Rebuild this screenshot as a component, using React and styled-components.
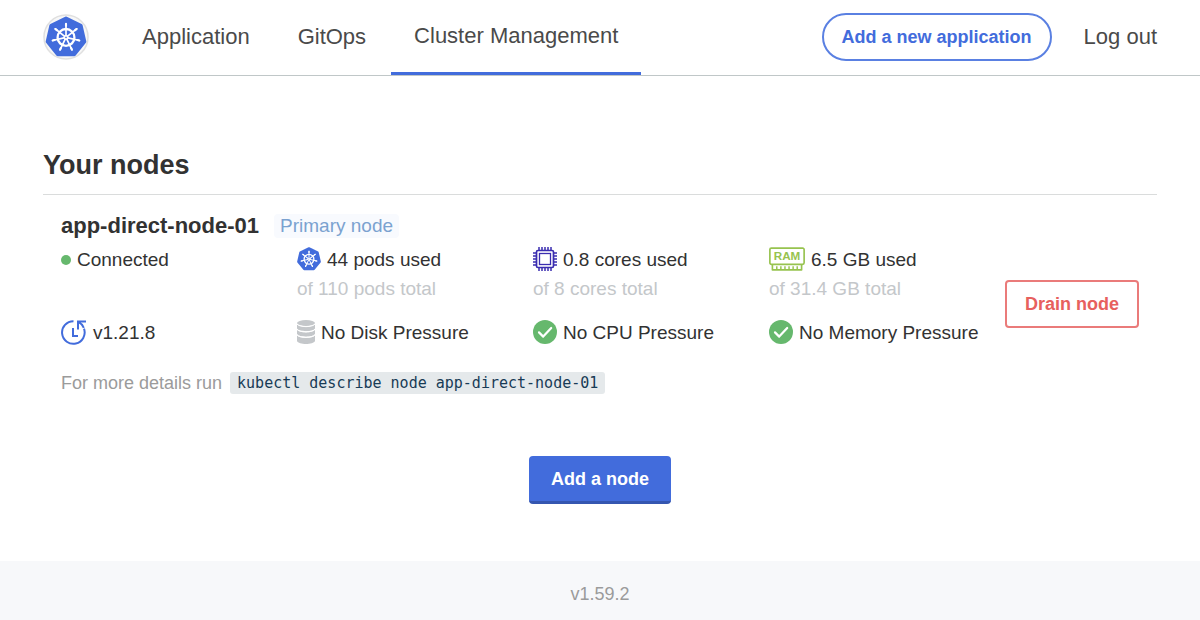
import React from "react";
import styled, { createGlobalStyle } from "styled-components";

const GlobalStyle = createGlobalStyle`
  *, *::before, *::after { box-sizing: border-box; }
  body {
    margin: 0;
    background: #fff;
    color: #323232;
    font-family: "Helvetica Neue", "Liberation Sans", Arial, sans-serif;
    font-size: 19px;
    line-height: 24px;
    -webkit-font-smoothing: antialiased;
  }
`;

const Page = styled.div`
  display: flex;
  flex-direction: column;
  min-height: 100vh;
`;

const Header = styled.header`
  display: flex;
  align-items: stretch;
  min-height: 76px;
  padding: 0 43px;
  border-bottom: 1px solid #c0c7c8;
`;

const LogoLink = styled.a`
  display: flex;
  align-items: center;
  margin-right: 30px;
  padding-bottom: 2px;
`;

const Nav = styled.nav`
  display: flex;
  gap: 2px;
`;

const Tab = styled.a`
  display: flex;
  align-items: center;
  padding: 0 23px ${({ $active }) => ($active ? 0 : 2)}px;
  border-bottom: ${({ $active }) => ($active ? "3px solid #426cdc" : "0")};
  color: #4a4a4a;
  font-size: 22px;
  text-decoration: none;
  white-space: nowrap;
`;

const Actions = styled.div`
  display: flex;
  align-items: center;
  gap: 32px;
  margin-left: auto;
  padding-bottom: 2px;
`;

const LogoutLink = styled.a`
  color: #4a4a4a;
  font-size: 22px;
  text-decoration: none;
`;

const Button = styled.button`
  height: 48px;
  padding: 0 18px;
  border: 2px solid currentColor;
  border-radius: 4px;
  background: #fff;
  color: #426cdc;
  font: bold 18px/24px "Helvetica Neue", "Liberation Sans", Arial, sans-serif;
  white-space: nowrap;
  cursor: pointer;
`;

const PillButton = styled(Button)`
  border-color: #5a80e2;
  border-radius: 24px;
`;

const DangerButton = styled(Button)`
  border-color: #ea7b7a;
  color: #e7605e;
`;

const PrimaryButton = styled(Button)`
  padding: 0 22px;
  border: 0;
  border-bottom: 3px solid #3556b0;
  background: #426cdc;
  color: #fff;
`;

const Main = styled.main`
  flex: 1;
  padding: 70px 43px 57px;
`;

const Title = styled.h1`
  margin: 0;
  padding: 2px 0 12px;
  border-bottom: 1px solid #dadcdc;
  font-size: 27px;
  line-height: 34px;
`;

const NodeCard = styled.section`
  display: flex;
  align-items: center;
  padding: 18px 18px 6px;
`;

const NodeInfo = styled.div`
  flex: 1;
`;

const NodeHeading = styled.div`
  display: flex;
  align-items: center;
  gap: 15px;
`;

const NodeName = styled.h2`
  margin: 0;
  font-size: 22px;
  line-height: 26px;
`;

const Tag = styled.span`
  padding: 0 6px;
  border-radius: 4px;
  background: #f8fafe;
  color: #7ba2d0;
`;

const Stats = styled.div`
  display: grid;
  grid-template-columns: repeat(4, 1fr);
  row-gap: 18px;
  padding-top: 8px;
`;

const Stat = styled.div`
  min-height: 26px;
`;

const StatLine = styled.div`
  display: flex;
  align-items: center;
  gap: 6px;
  min-height: 26px;
  white-space: nowrap;
  svg { flex: none; }
`;

const StatTotal = styled.div`
  padding-top: 3px;
  color: #c4c7ca;
  line-height: 26px;
`;

const Dot = styled.span`
  width: 10px;
  height: 10px;
  border-radius: 50%;
  background: #66b86d;
`;

const Details = styled.p`
  display: flex;
  align-items: center;
  gap: 8px;
  margin: 25px 0 0;
  color: #9b9b9b;
  font-size: 18px;
`;

const Code = styled.code`
  padding: 0 7px;
  border-radius: 3px;
  background: #e5e9eb;
  color: #183b56;
  font: 15px/22px "DejaVu Sans Mono", monospace;
`;

const AddRow = styled.div`
  display: flex;
  justify-content: center;
  padding-top: 55px;
`;

const Footer = styled.footer`
  padding: 21px 0 14px;
  background: #f7f8fa;
  color: #9b9b9b;
  font-size: 18px;
  text-align: center;
`;

const spokes = [0, 1, 2, 3, 4, 5, 6].map((n) => (n * 360) / 7);
const heptagon = spokes
  .map((a) => {
    const r = (a * Math.PI) / 180;
    return `${(50 + 45 * Math.sin(r)).toFixed(1)},${(51 - 45 * Math.cos(r)).toFixed(1)}`;
  })
  .join(" ");

function Helm() {
  return (
    <g>
      <polygon points={heptagon} fill="#426cdc" stroke="#426cdc" strokeWidth="9" strokeLinejoin="round" />
      <g stroke="#fff" fill="none" strokeLinecap="round">
        <circle cx="50" cy="51" r="20" strokeWidth="5.5" />
        {spokes.map((a) => (
          <g key={a} transform={`rotate(${a} 50 51)`}>
            <path d="M50 46V18" strokeWidth="4" />
            <path d="M50 23v-4" strokeWidth="5" />
          </g>
        ))}
        <circle cx="50" cy="51" r="4" strokeWidth="4" />
      </g>
    </g>
  );
}

function Logo() {
  return (
    <svg width="46" height="46" viewBox="0 0 46 46" aria-hidden="true">
      <circle cx="23" cy="23" r="22" fill="#f7f7f7" stroke="#e0e0e0" strokeWidth="1.5" />
      <svg x="2" y="2" width="42" height="42" viewBox="0 0 100 100">
        <Helm />
      </svg>
    </svg>
  );
}

function PodIcon() {
  return (
    <svg width="24" height="26" viewBox="1 1 98 106" aria-hidden="true">
      <Helm />
    </svg>
  );
}

function CpuIcon() {
  return (
    <svg width="24" height="26" viewBox="0 1 24 26" fill="none" stroke="#3a2db0" aria-hidden="true">
      <rect x="3.5" y="4.5" width="17" height="17" rx="1.5" strokeWidth="1.7" />
      <rect x="6.5" y="7.5" width="11" height="11" strokeWidth="1.3" />
      <path
        strokeWidth="1.5"
        d="M6 1v3M9 1v3M12 1v3M15 1v3M18 1v3M6 22v3M9 22v3M12 22v3M15 22v3M18 22v3M0 7h3M0 10h3M0 13h3M0 16h3M0 19h3M21 7h3M21 10h3M21 13h3M21 16h3M21 19h3"
      />
    </svg>
  );
}

function RamIcon() {
  return (
    <svg width="36" height="26" viewBox="0 1 37 26" fill="none" stroke="#97c34f" aria-hidden="true">
      <path
        strokeWidth="1.7"
        strokeLinejoin="round"
        d="M3.5 18.500H2.500A1.600 1.600 0 0 1 .9 16.900V3.300a1.500 1.500 0 0 1 1.500-1.500h32.200a1.500 1.500 0 0 1 1.500 1.500v13.600a1.600 1.600 0 0 1-1.600 1.600h-1M3.500 18.500h30v5.700h-30z"
      />
      <path strokeWidth="1.5" d="M8 20.500v3.500M12.200 20.500v3.500M16.400 20.500v3.500M20.600 20.500v3.500M24.800 20.500v3.500M29 20.500v3.500" />
      <text x="18.5" y="14" textAnchor="middle" fill="#97c34f" stroke="none" fontFamily="Liberation Sans, Arial, sans-serif" fontWeight="bold" fontSize="12">
        RAM
      </text>
    </svg>
  );
}

function VersionIcon() {
  return (
    <svg width="26" height="26" viewBox="0 1 26 26" fill="none" stroke="#426cdc" strokeWidth="2" aria-hidden="true">
      <path d="M12.500 2.200A11.300 11.300 0 1 0 23 9.700" />
      <path d="M17 10.500V2.500H25M17.300 2.800c2.500 1.200 4.300 3.200 5.500 6" />
      <path d="M12 9v8h5" />
    </svg>
  );
}

function DiskIcon() {
  return (
    <svg width="18" height="26" viewBox="0 1 18 26" fill="#c4c7ca" aria-hidden="true">
      <ellipse cx="9" cy="4" rx="9" ry="3" />
      <path d="M0 5c2 3.500 16 3.500 18 0v4.500c-1.500 3.500-16.500 3.500-18 0z" />
      <path d="M0 10.800c2 3.500 16 3.500 18 0v4.200c-1.500 3.500-16.500 3.500-18 0z" />
      <path d="M0 16.300c2 3.500 16 3.500 18 0v5.700c-1.500 4-16.500 4-18 0z" />
      <path
        d="M0 5c2 3.500 16 3.500 18 0M0 10.200c2 3.500 16 3.500 18 0M0 15.700c2 3.500 16 3.500 18 0"
        fill="none"
        stroke="#fff"
        strokeWidth="1"
      />
    </svg>
  );
}

function CheckIcon() {
  return (
    <svg width="24" height="26" viewBox="0 0 24 26" aria-hidden="true">
      <circle cx="12" cy="12" r="12" fill="#66b86d" />
      <path d="M6 12.400l4.200 4.200 8-8.600" fill="none" stroke="#fff" strokeWidth="2.2" strokeLinecap="round" strokeLinejoin="round" />
    </svg>
  );
}

export default function App() {
  return (
    <Page>
      <GlobalStyle />
      <Header>
        <LogoLink href="#" aria-label="Home">
          <Logo />
        </LogoLink>
        <Nav>
          <Tab href="#application">Application</Tab>
          <Tab href="#gitops">GitOps</Tab>
          <Tab href="#cluster" $active aria-current="page">Cluster Management</Tab>
        </Nav>
        <Actions>
          <PillButton type="button">Add a new application</PillButton>
          <LogoutLink href="#logout">Log out</LogoutLink>
        </Actions>
      </Header>
      <Main>
        <Title>Your nodes</Title>
        <NodeCard>
          <NodeInfo>
            <NodeHeading>
              <NodeName>app-direct-node-01</NodeName>
              <Tag>Primary node</Tag>
            </NodeHeading>
            <Stats>
              <Stat>
                <StatLine><Dot />Connected</StatLine>
              </Stat>
              <Stat>
                <StatLine><PodIcon />44 pods used</StatLine>
                <StatTotal>of 110 pods total</StatTotal>
              </Stat>
              <Stat>
                <StatLine><CpuIcon />0.8 cores used</StatLine>
                <StatTotal>of 8 cores total</StatTotal>
              </Stat>
              <Stat>
                <StatLine><RamIcon />6.5 GB used</StatLine>
                <StatTotal>of 31.4 GB total</StatTotal>
              </Stat>
              <StatLine><VersionIcon />v1.21.8</StatLine>
              <StatLine><DiskIcon />No Disk Pressure</StatLine>
              <StatLine><CheckIcon />No CPU Pressure</StatLine>
              <StatLine><CheckIcon />No Memory Pressure</StatLine>
            </Stats>
            <Details>
              For more details run
              <Code>kubectl describe node app-direct-node-01</Code>
            </Details>
          </NodeInfo>
          <DangerButton type="button">Drain node</DangerButton>
        </NodeCard>
        <AddRow>
          <PrimaryButton type="button">Add a node</PrimaryButton>
        </AddRow>
      </Main>
      <Footer>v1.59.2</Footer>
    </Page>
  );
}
